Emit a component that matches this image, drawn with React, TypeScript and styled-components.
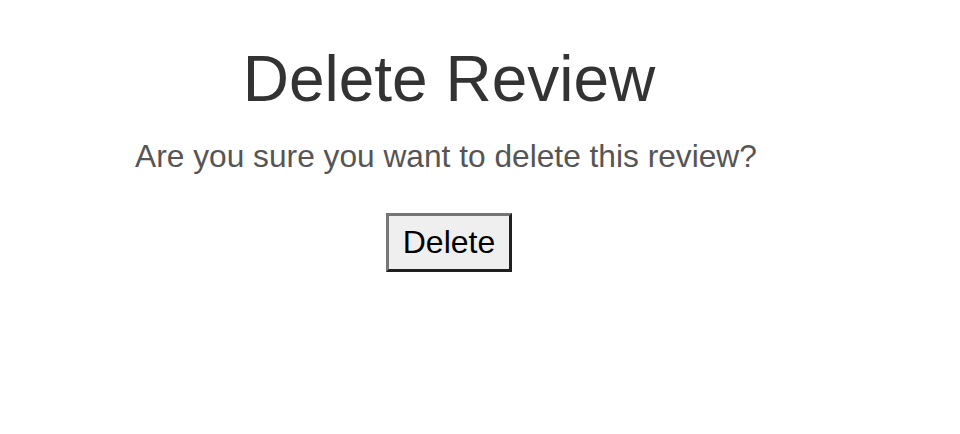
import React from "react";
import styled, { createGlobalStyle } from "styled-components";

const GlobalStyle = createGlobalStyle`
  html, body {
    margin: 0;
    padding: 0;
    background: #ffffff;
  }
  body {
    font-family: "Liberation Sans", Arial, Helvetica, sans-serif;
  }
`;

const Page = styled.main`
  box-sizing: border-box;
  width: 898px;
  padding: 42px 8px 0;
  display: flex;
  flex-direction: column;
  align-items: center;
  text-align: center;
`;

const Title = styled.h1`
  margin: 0;
  font-size: 64px;
  font-weight: 400;
  line-height: 74px;
  color: #333333;
`;

const Message = styled.p`
  margin: 22px 6px 0 0;
  font-size: 31.7px;
  line-height: 37px;
  color: #555555;
`;

const DeleteButton = styled.button`
  margin-top: 38px;
  padding: 8px 14px;
  font-family: "Liberation Sans", Arial, Helvetica, sans-serif;
  font-size: 32px;
  line-height: 37px;
  color: #000000;
  background: #efefef;
  border-width: 3px;
  border-style: solid;
  border-color: #767676 #1f1f1f #1f1f1f #767676;
  cursor: pointer;
`;

export default function App() {
  return (
    <>
      <GlobalStyle />
      <Page>
        <Title>Delete Review</Title>
        <Message>Are you sure you want to delete this review?</Message>
        <DeleteButton type="button">Delete</DeleteButton>
      </Page>
    </>
  );
}
